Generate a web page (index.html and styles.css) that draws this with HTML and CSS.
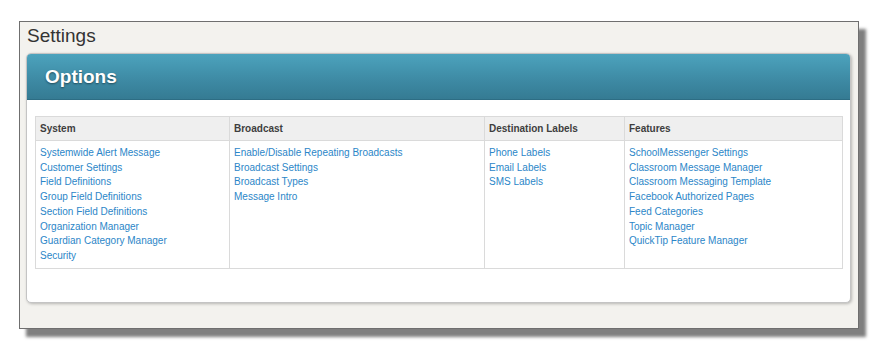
FILE: index.html
```html
<!DOCTYPE html>
<html>
<head>
<meta charset="utf-8">
<title>Settings</title>
<link rel="stylesheet" href="styles.css">
</head>
<body>
<div class="frame">
  <div class="page-title">Settings</div>
  <div class="panel">
    <div class="panel-head">Options</div>
    <div class="panel-body">
      <table class="opts">
        <colgroup>
          <col class="c1"><col class="c2"><col class="c3"><col class="c4">
        </colgroup>
        <thead>
          <tr><th>System</th><th>Broadcast</th><th>Destination Labels</th><th>Features</th></tr>
        </thead>
        <tbody>
          <tr>
            <td>
              <a href="#">Systemwide Alert Message</a>
              <a href="#">Customer Settings</a>
              <a href="#">Field Definitions</a>
              <a href="#">Group Field Definitions</a>
              <a href="#">Section Field Definitions</a>
              <a href="#">Organization Manager</a>
              <a href="#">Guardian Category Manager</a>
              <a href="#">Security</a>
            </td>
            <td>
              <a href="#">Enable/Disable Repeating Broadcasts</a>
              <a href="#">Broadcast Settings</a>
              <a href="#">Broadcast Types</a>
              <a href="#">Message Intro</a>
            </td>
            <td>
              <a href="#">Phone Labels</a>
              <a href="#">Email Labels</a>
              <a href="#">SMS Labels</a>
            </td>
            <td>
              <a href="#">SchoolMessenger Settings</a>
              <a href="#">Classroom Message Manager</a>
              <a href="#">Classroom Messaging Template</a>
              <a href="#">Facebook Authorized Pages</a>
              <a href="#">Feed Categories</a>
              <a href="#">Topic Manager</a>
              <a href="#">QuickTip Feature Manager</a>
            </td>
          </tr>
        </tbody>
      </table>
    </div>
  </div>
</div>
</body>
</html>
```

FILE: styles.css
```css
html, body {
  margin: 0;
  padding: 0;
  background: #ffffff;
}

body {
  box-sizing: border-box;
  min-height: 361px;
  font-family: "Liberation Sans", Arial, sans-serif;
  padding: 21px 0 0 19px;
}

.frame {
  box-sizing: border-box;
  width: 840px;
  border: 1px solid #6f6f6f;
  background: #f3f2ee;
  padding: 0 7px 25px 6px;
  box-shadow: 7px 8px 3px rgba(0, 0, 0, 0.5);
}

.page-title {
  font-size: 19px;
  line-height: 27px;
  height: 31px;
  color: #333333;
  padding-left: 1px;
}

.panel {
  background: #ffffff;
  border: 1px solid #c4c4c4;
  border-radius: 5px;
  box-shadow: 1px 1px 3px rgba(0, 0, 0, 0.25);
  overflow: hidden;
}

.panel-head {
  height: 45px;
  line-height: 45px;
  padding-left: 18px;
  background: linear-gradient(to bottom, #4ca3bd 0%, #3d89a3 60%, #357b93 100%);
  border-bottom: 1px solid #2d6d84;
  color: #ffffff;
  font-weight: bold;
  font-size: 19px;
  text-shadow: 0 1px 2px rgba(0, 0, 0, 0.45);
}

.panel-body {
  padding: 16px 7px 33px 8px;
}

.opts {
  width: 807px;
  table-layout: fixed;
  border-collapse: collapse;
  font-size: 10px;
}

.opts .c1 { width: 194px; }
.opts .c2 { width: 255px; }
.opts .c3 { width: 140px; }
.opts .c4 { width: 218px; }

.opts th {
  text-align: left;
  font-weight: bold;
  color: #3e3e3e;
  background: #efefef;
  height: 23px;
  padding: 0 4px;
  border: 1px solid #dadada;
}

.opts td {
  vertical-align: top;
  padding: 5px 4px 4px 4px;
  border: 1px solid #dadada;
}

.opts td a {
  display: block;
  color: #2b86c8;
  text-decoration: none;
  line-height: 14.7px;
  white-space: nowrap;
}
```
